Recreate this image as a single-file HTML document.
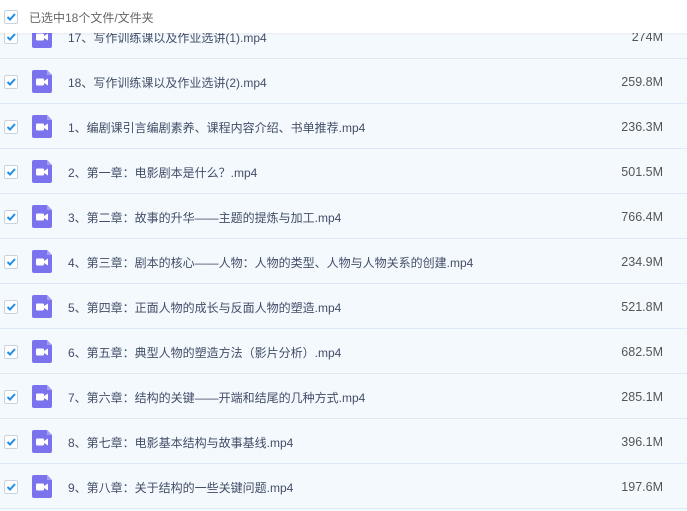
<!DOCTYPE html>
<html><head><meta charset="utf-8"><style>
body{margin:0;width:687px;height:511px;overflow:hidden;background:#f4f9fe;font-family:"Liberation Sans","Noto Sans CJK SC",sans-serif;font-size:12px;color:#424e67;position:relative}
.hdr{position:absolute;left:0;top:0;width:687px;height:33px;background:#fff;z-index:2;box-shadow:0 1px 2px rgba(0,0,0,.06)}
.hdr span{position:absolute;left:29px;top:9px;color:#666;font-size:12px}
.cb{position:absolute;left:4px;width:12px;height:12px;border:1px solid #c9d3e0;background:#fff;border-radius:2px}
.cb svg{position:absolute;left:0;top:0}
.row{position:absolute;left:0;width:687px;height:44px;border-bottom:1px solid #dde9f6;background:#f4f9fe}
.row .cb{top:16px}
.ic{position:absolute;left:32px;top:11px;width:20px;height:23px}
.nm{position:absolute;left:68px;top:15px;white-space:nowrap}
.sz{position:absolute;right:24px;top:16px;font-size:12.5px;color:#555}
</style></head><body>
<div class="hdr"><div class="cb" style="top:10px"><svg width="12" height="12" viewBox="0 0 12 12"><path d="M2.5 6 L5 8.5 L10 3" stroke="#1f8fea" stroke-width="2" fill="none"/></svg></div><span>已选中18个文件/文件夹</span></div>
<div id="list"></div>
<script>
var d=[["17、写作训练课以及作业选讲(1).mp4","274M"],["18、写作训练课以及作业选讲(2).mp4","259.8M"],["1、编剧课引言编剧素养、课程内容介绍、书单推荐.mp4","236.3M"],["2、第一章：电影剧本是什么？.mp4","501.5M"],["3、第二章：故事的升华——主题的提炼与加工.mp4","766.4M"],["4、第三章：剧本的核心——人物：人物的类型、人物与人物关系的创建.mp4","234.9M"],["5、第四章：正面人物的成长与反面人物的塑造.mp4","521.8M"],["6、第五章：典型人物的塑造方法（影片分析）.mp4","682.5M"],["7、第六章：结构的关键——开端和结尾的几种方式.mp4","285.1M"],["8、第七章：电影基本结构与故事基线.mp4","396.1M"],["9、第八章：关于结构的一些关键问题.mp4","197.6M"]];
var h="";d.forEach(function(r,i){var t=14+i*45;h+='<div class="row" style="top:'+t+'px"><div class="cb"><svg width="12" height="12" viewBox="0 0 12 12"><path d="M2.5 6 L5 8.5 L10 3" stroke="#1f8fea" stroke-width="2" fill="none"/></svg></div><svg class="ic" viewBox="0 0 20 23"><path d="M2 0H15L20 5V21a2 2 0 0 1-2 2H2a2 2 0 0 1-2-2V2a2 2 0 0 1 2-2z" fill="#7b73ee"/><path d="M15 0V5H20z" fill="#a49ef5"/><rect x="4" y="8.5" width="8" height="7" rx="1.2" fill="#fff"/><path d="M12 11L16 8.5V15.5L12 13z" fill="#fff"/></svg><div class="nm">'+r[0]+'</div><div class="sz">'+r[1]+'</div></div>';});
document.getElementById("list").innerHTML=h;
</script>
</body></html>
